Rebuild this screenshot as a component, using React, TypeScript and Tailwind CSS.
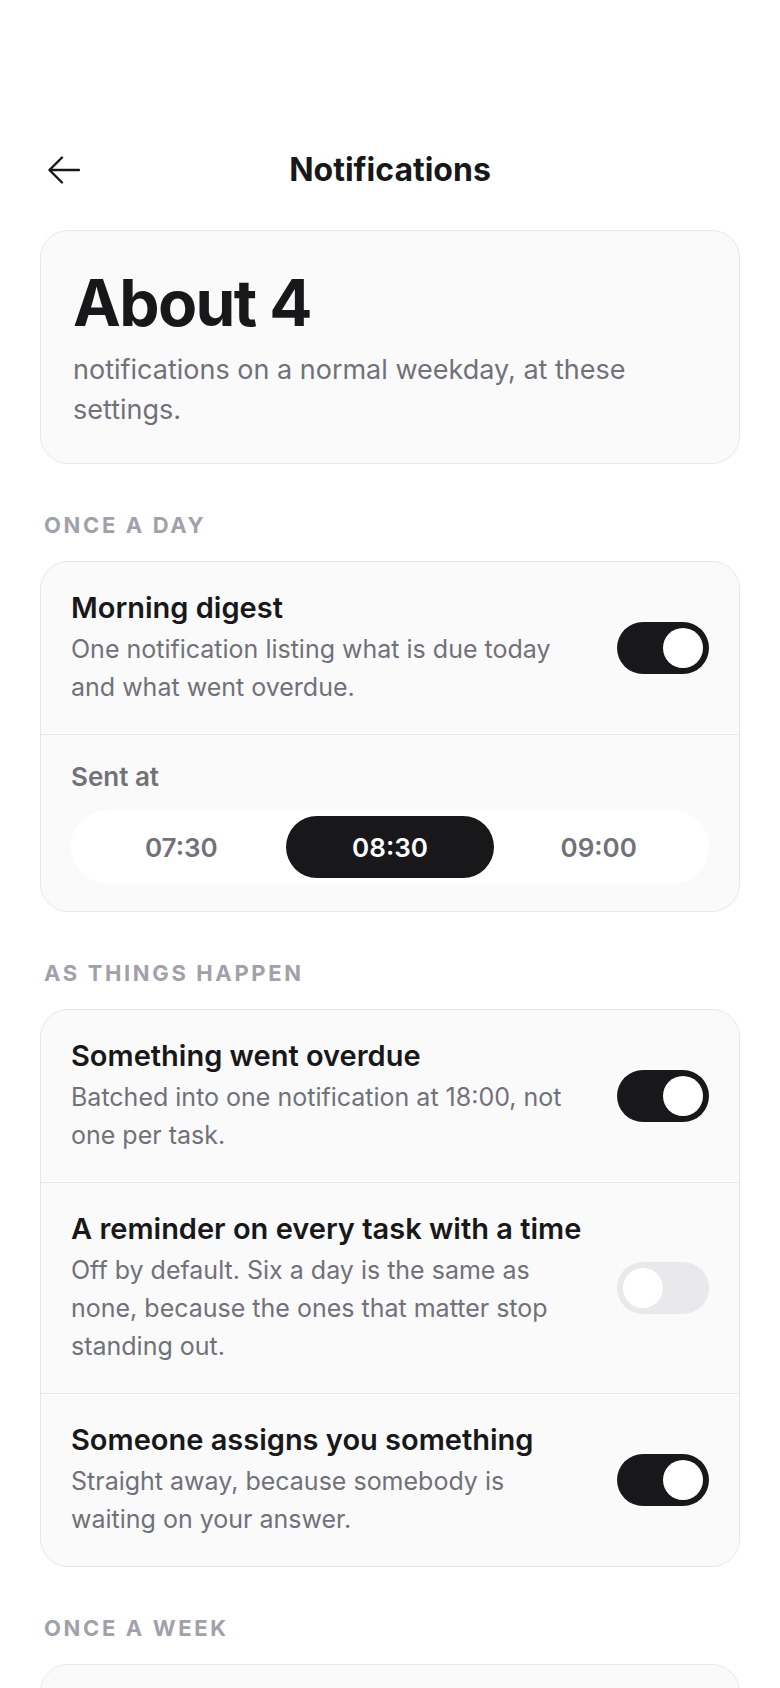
import { useState } from 'react'

type Row = { id: string; title: string; desc: string; on: boolean }

function BackArrow() {
  return (
    <svg width="32" height="28" viewBox="0 0 32 28" fill="none" stroke="#18181b" strokeWidth="2.4" strokeLinecap="round" strokeLinejoin="round">
      <path d="M31 14H2" />
      <path d="M14 1.5 1.5 14 14 26.5" />
    </svg>
  )
}

function Toggle({ on, onClick }: { on: boolean; onClick: () => void }) {
  return (
    <button
      onClick={onClick}
      className={`flex h-[52px] w-[92px] shrink-0 items-center rounded-full p-[6px] transition-colors ${
        on ? 'justify-end bg-[#18181b]' : 'justify-start bg-[#e9e9eb]'
      }`}
    >
      <span className="block h-[40px] w-[40px] rounded-full bg-white" />
    </button>
  )
}

function SectionLabel({ children }: { children: string }) {
  return (
    <div className="mb-[22px] mt-[47px] px-1 text-[22px] font-bold uppercase leading-[28px] tracking-[0.12em] text-[#a1a1aa]">
      {children}
    </div>
  )
}

function ToggleRow({ row, onToggle }: { row: Row; onToggle: () => void }) {
  return (
    <div className="flex items-center gap-7 px-[30px] py-[28px]">
      <div className="flex-1">
        <div className="text-[29px] font-semibold leading-[36px] text-[#18181b]">{row.title}</div>
        <p className="mt-[4px] text-[25px] leading-[38px] text-[#71717a]">{row.desc}</p>
      </div>
      <Toggle on={row.on} onClick={onToggle} />
    </div>
  )
}

const TIMES = ['07:30', '08:30', '09:00']

export default function App() {
  const [digest, setDigest] = useState(true)
  const [time, setTime] = useState('08:30')
  const [rows, setRows] = useState<Row[]>([
    { id: 'overdue', title: 'Something went overdue', desc: 'Batched into one notification at 18:00, not one per task.', on: true },
    { id: 'reminder', title: 'A reminder on every task with a time', desc: 'Off by default. Six a day is the same as none, because the ones that matter stop standing out.', on: false },
    { id: 'assigned', title: 'Someone assigns you something', desc: 'Straight away, because somebody is waiting on your answer.', on: true },
  ])
  const [weekly, setWeekly] = useState(true)

  const flip = (id: string) => setRows(rs => rs.map(r => (r.id === id ? { ...r, on: !r.on } : r)))

  return (
    <div className="min-h-screen bg-white pb-20 font-['Inter',sans-serif]">
      <div className="px-10 pt-[126px]">
        {/* Header */}
        <div className="mb-4 grid h-[88px] grid-cols-[64px_1fr_64px] items-center">
          <button className="ml-2 flex items-center">
            <BackArrow />
          </button>
          <h1 className="text-center text-[32px] font-bold leading-none text-[#18181b]">Notifications</h1>
          <div />
        </div>

        {/* Daily estimate */}
        <div className="rounded-[28px] border border-[#e7e7e9] bg-[#fafafa] px-8 pb-[33px] pt-[40px]">
          <div className="text-[64px] font-bold leading-[64px] tracking-[-0.025em] text-[#18181b]">About 4</div>
          <p className="mt-[15px] text-[27px] leading-[40px] text-[#71717a]">
            notifications on a normal weekday, at these settings.
          </p>
        </div>

        <SectionLabel>Once a day</SectionLabel>
        <div className="overflow-hidden rounded-[28px] border border-[#e7e7e9] bg-[#fafafa]">
          <ToggleRow
            row={{ id: 'digest', title: 'Morning digest', desc: 'One notification listing what is due today and what went overdue.', on: digest }}
            onToggle={() => setDigest(d => !d)}
          />
          <div className="border-t border-[#e7e7e9] px-[30px] pb-[27px] pt-[24px]">
            <div className="text-[26px] font-semibold leading-[36px] text-[#71717a]">Sent at</div>
            <div className="mt-[15px] flex h-[74px] rounded-full bg-white p-[6px]">
              {TIMES.map(t => (
                <button
                  key={t}
                  onClick={() => setTime(t)}
                  className={`flex-1 rounded-full text-[26px] font-semibold ${
                    time === t ? 'bg-[#18181b] text-white' : 'text-[#71717a]'
                  }`}
                >
                  {t}
                </button>
              ))}
            </div>
          </div>
        </div>

        <SectionLabel>As things happen</SectionLabel>
        <div className="overflow-hidden rounded-[28px] border border-[#e7e7e9] bg-[#fafafa]">
          {rows.map((r, i) => (
            <div key={r.id} className={i > 0 ? 'border-t border-[#e7e7e9]' : ''}>
              <ToggleRow row={r} onToggle={() => flip(r.id)} />
            </div>
          ))}
        </div>

        <SectionLabel>Once a week</SectionLabel>
        <div className="overflow-hidden rounded-[28px] border border-[#e7e7e9] bg-[#fafafa]">
          <ToggleRow
            row={{ id: 'weekly', title: 'Weekly review', desc: 'What got done, and what keeps sliding. Monday at 08:30.', on: weekly }}
            onToggle={() => setWeekly(w => !w)}
          />
        </div>
      </div>
    </div>
  )
}
